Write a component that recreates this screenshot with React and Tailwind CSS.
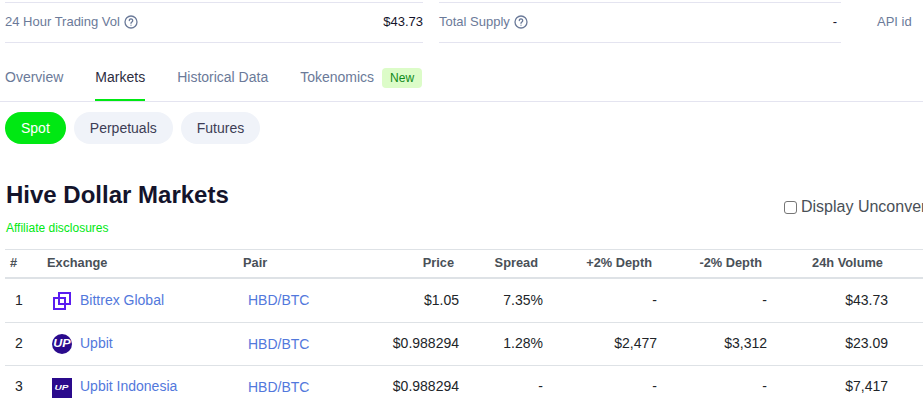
const LIBERATION = "font-['Liberation_Sans',Arial,sans-serif]";

const ROWS = [
  { rank: 1, name: 'Bittrex Global', logo: 'bittrex', price: '$1.05', spread: '7.35%', up: '-', down: '-', vol: '$43.73' },
  { rank: 2, name: 'Upbit', logo: 'upbit', price: '$0.988294', spread: '1.28%', up: '$2,477', down: '$3,312', vol: '$23.09' },
  { rank: 3, name: 'Upbit Indonesia', logo: 'indo', price: '$0.988294', spread: '-', up: '-', down: '-', vol: '$7,417' },
];

function HelpIcon() {
  return (
    <svg width="14" height="14" viewBox="0 0 14 14" fill="none" stroke="#6b7a99" strokeWidth="1.3" className="ml-1 shrink-0">
      <circle cx="7" cy="7" r="6" />
      <path d="M5.3 5.6a1.7 1.7 0 1 1 2.6 1.4c-.6.4-.9.7-.9 1.3" strokeLinecap="round" />
      <circle cx="7" cy="10.2" r="0.6" fill="#6b7a99" stroke="none" />
    </svg>
  );
}

function Logo({ type }) {
  if (type === 'bittrex') {
    return (
      <svg width="20" height="20" viewBox="0 0 20 20" fill="none" stroke="#5a1cf0" strokeWidth="2" className="shrink-0 mt-px">
        <path d="M7 2h11v11H7z" />
        <path d="M2 7h11v11H2z" />
      </svg>
    );
  }
  if (type === 'upbit') {
    return (
      <div className="w-5 h-5 mt-px rounded-full bg-[#2a0a8c] flex items-center justify-center shrink-0">
        <span className="text-white text-[10px] font-bold italic leading-none scale-x-125">UP</span>
      </div>
    );
  }
  return (
    <div className="w-5 h-5 mt-[2px] bg-[#2a0a8c] flex items-center justify-center shrink-0">
      <span className="text-white text-[8px] font-bold italic leading-none scale-x-125">UP</span>
    </div>
  );
}

function Stat({ label, value, help, className }) {
  return (
    <div className={`flex items-center justify-between h-[41px] pb-[2px] border-y border-[#e4e4f0] ${className}`}>
      <div className="flex items-center text-[13px] text-[#6b7a99]">
        {label}
        {help && <HelpIcon />}
      </div>
      <span className="text-[13px] text-[#14142b]">{value}</span>
    </div>
  );
}

export default function App() {
  return (
    <div className={`w-[923px] h-[418px] overflow-hidden bg-white ${LIBERATION}`}>
      {/* Stats */}
      <div className="flex pt-[2px] pl-[5px]">
        <Stat label="24 Hour Trading Vol" value="$43.73" help className="w-[418px]" />
        <Stat label="Total Supply" value={<span className="pr-[4px]">-</span>} help className="w-[402px] ml-[16px]" />
        <div className="ml-[36px] h-[41px] pb-[2px] flex items-center text-[13px] text-[#6b7a99] whitespace-nowrap">API id</div>
      </div>

      {/* Tabs */}
      <div className="mt-[13px] pl-[5px] h-[46px] flex gap-[32px] border-b border-[#e4e4f0] text-sm text-[#6b7a99]">
        <div className="h-[45px] pt-[11px] leading-[20px]">Overview</div>
        <div className="h-[45px] pt-[11px] leading-[20px] text-[#2d2d3f] border-b-2 border-[#00e813]">Markets</div>
        <div className="h-[45px] pt-[11px] leading-[20px]">Historical Data</div>
        <div className="flex items-start gap-2 pt-[11px]">
          <span className="leading-[20px]">Tokenomics</span>
          <span className="bg-[#dcfcc8] text-[#0f8a1a] text-xs rounded-[4px] w-[40px] h-[20px] mt-px flex items-center justify-center">New</span>
        </div>
      </div>

      {/* Market type pills */}
      <div className="flex gap-2 mt-[10px] pl-[5px] text-sm">
        <div className="h-8 px-4 rounded-full bg-[#00e813] text-white flex items-center">Spot</div>
        <div className="h-8 px-4 rounded-full bg-[#f0f3f9] text-[#3d3d55] flex items-center">Perpetuals</div>
        <div className="h-8 px-4 rounded-full bg-[#f0f3f9] text-[#3d3d55] flex items-center">Futures</div>
      </div>

      {/* Heading */}
      <div className="flex justify-between mt-[36px] pl-[6px]">
        <div>
          <h1 className="text-2xl leading-[30px] font-bold text-[#14142b]">Hive Dollar Markets</h1>
          <p className="mt-[10px] text-xs leading-[16px] text-[#00e813]">Affiliate disclosures</p>
        </div>
        <label className="flex items-center mt-[17px] h-5 w-[139px] shrink-0 text-base text-[#495057] whitespace-nowrap">
          <span className="w-[13px] h-[13px] border border-[#767676] rounded-[3px] bg-white mr-1 shrink-0" />
          Display Unconverted
        </label>
      </div>

      {/* Table */}
      <div className="mt-[13px] ml-[5px] overflow-hidden">
        <table className="table-fixed w-[1000px] border-separate border-spacing-0 text-[#212529]">
          <colgroup>
            <col className="w-[37px]" />
            <col className="w-[196px]" />
            <col className="w-[122px]" />
            <col className="w-[104px]" />
            <col className="w-[84px]" />
            <col className="w-[114px]" />
            <col className="w-[110px]" />
            <col className="w-[121px]" />
            <col />
          </colgroup>
          <thead>
            <tr className="text-[12.8px] text-[#495057] [&>th]:h-[30px] [&>th]:pb-[2px] [&>th]:border-t [&>th]:border-b-2 [&>th]:border-[#dee2e6]">
              <th className="text-left font-bold pl-[5px]">#</th>
              <th className="text-left font-bold pl-[5px]">Exchange</th>
              <th className="text-left font-bold pl-[5px]">Pair</th>
              <th className="text-right font-bold pr-[10px]">Price</th>
              <th className="text-right font-bold pr-[10px]">Spread</th>
              <th className="text-right font-bold pr-[10px]">+2% Depth</th>
              <th className="text-right font-bold pr-[10px]">-2% Depth</th>
              <th className="text-right font-bold pr-[10px]">24h Volume</th>
              <th />
            </tr>
          </thead>
          <tbody className="text-sm leading-5">
            {ROWS.map((r, i) => (
              <tr
                key={r.rank}
                className={
                  i === 0
                    ? '[&>td]:h-[44px] [&>td]:align-top [&>td]:pt-[11px] [&>td]:border-b [&>td]:border-[#dee2e6]'
                    : i === 1
                      ? '[&>td]:h-[43px] [&>td]:align-top [&>td]:pt-[10px] [&>td]:border-b [&>td]:border-[#dee2e6]'
                      : '[&>td]:h-[43px] [&>td]:align-top [&>td]:pt-[10px]'
                }
              >
                <td className="pl-[10px]">{r.rank}</td>
                <td className="pl-[10px]">
                  <div className="flex items-start gap-2 text-[#5278dc]">
                    <Logo type={r.logo} />
                    <span>{r.name}</span>
                  </div>
                </td>
                <td className="pl-[10px] text-[#5278dc]">
                  <span className={i > 0 ? 'relative top-px' : ''}>HBD/BTC</span>
                </td>
                <td className="text-right pr-[5px]">{r.price}</td>
                <td className="text-right pr-[5px]">{r.spread}</td>
                <td className="text-right pr-[5px]">{r.up}</td>
                <td className="text-right pr-[5px]">{r.down}</td>
                <td className="text-right pr-[5px]">{r.vol}</td>
                <td />
              </tr>
            ))}
          </tbody>
        </table>
      </div>
    </div>
  );
}
